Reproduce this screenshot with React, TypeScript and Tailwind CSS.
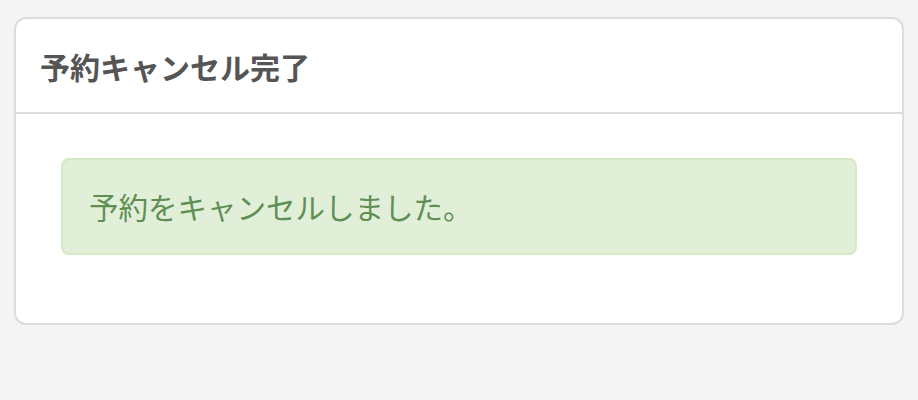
export default function App() {
  return (
    <div
      className="h-[400px] w-[918px] bg-[#f4f4f4] px-[14px] pt-[17px]"
      style={{ fontFamily: '"Noto Sans CJK JP", "Noto Sans", sans-serif' }}
    >
      <div className="overflow-hidden rounded-[12px] border-2 border-[#dcdcdc] bg-white">
        <div className="flex h-[95px] items-center border-b-2 border-[#dcdcdc] px-[24px]">
          <h1 className="text-[30px] font-bold leading-none text-[#555555]">予約キャンセル完了</h1>
        </div>
        <div className="px-[45px] pb-[68px] pt-[44px]">
          <div className="flex h-[97px] items-center rounded-[8px] border-2 border-[#d6e9c6] bg-[#e1efd9] px-[26px]">
            <p className="text-[29.5px] leading-none text-[#5f8f55]">予約をキャンセルしました。</p>
          </div>
        </div>
      </div>
    </div>
  )
}
